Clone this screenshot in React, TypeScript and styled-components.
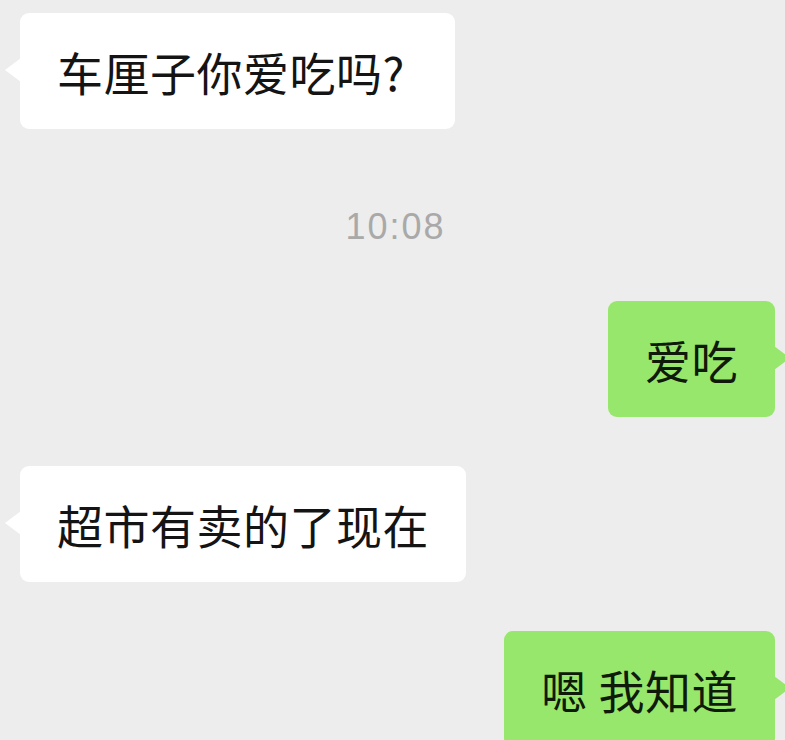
import React from 'react';
import styled, { createGlobalStyle } from 'styled-components';

const GlobalStyle = createGlobalStyle`
  html, body {
    margin: 0;
    padding: 0;
    overflow: hidden;
    background: #ededed;
  }
`;

const Chat = styled.div`
  width: 785px;
  height: 740px;
  box-sizing: border-box;
  padding-top: 13px;
  display: flex;
  flex-direction: column;
  gap: 49px;
  background: #ededed;
  font-family: "Noto Sans CJK SC", "Noto Sans", sans-serif;
`;

const Row = styled.div<{ $mine?: boolean }>`
  display: flex;
  justify-content: ${p => (p.$mine ? 'flex-end' : 'flex-start')};
  padding: ${p => (p.$mine ? '0 10px 0 0' : '0 0 0 20px')};
`;

const Bubble = styled.div<{ $mine?: boolean }>`
  position: relative;
  box-sizing: border-box;
  height: 116px;
  padding: 0 37px;
  display: flex;
  align-items: center;
  border-radius: 9px;
  background: ${p => (p.$mine ? '#96e76b' : '#ffffff')};
  color: ${p => (p.$mine ? '#0f1a09' : '#141414')};
  font-size: 46px;
  line-height: 1;
  letter-spacing: 0.5px;
  white-space: pre;

  &::before {
    content: '';
    position: absolute;
    top: 45px;
    width: 16px;
    height: 24px;
    background: inherit;
    ${p =>
      p.$mine
        ? 'right: -15px; clip-path: polygon(0 0, 100% 50%, 0 100%);'
        : 'left: -15px; clip-path: polygon(100% 0, 0 50%, 100% 100%);'}
  }
`;

/* trailing punctuation takes most of a full-width cell, like the phone font */
const Punct = styled.span`
  display: inline-block;
  width: 0.78em;
`;

const Time = styled.div`
  display: flex;
  justify-content: center;
  padding: 29px 0 5px 6px;
  height: 40px;
  align-items: center;
  font-family: "Liberation Sans", Arial, sans-serif;
  font-size: 36px;
  letter-spacing: 2px;
  color: #a9a9a9;
`;

type Item =
  | { kind: 'msg'; mine: boolean; text: string; punct?: string }
  | { kind: 'time'; text: string };

const items: Item[] = [
  { kind: 'msg', mine: false, text: '车厘子你爱吃吗', punct: '?' },
  { kind: 'time', text: '10:08' },
  { kind: 'msg', mine: true, text: '爱吃' },
  { kind: 'msg', mine: false, text: '超市有卖的了现在' },
  { kind: 'msg', mine: true, text: '嗯 我知道' },
];

export default function App() {
  return (
    <>
      <GlobalStyle />
      <Chat>
        {items.map((it, i) =>
          it.kind === 'time' ? (
            <Time key={i}>{it.text}</Time>
          ) : (
            <Row key={i} $mine={it.mine}>
              <Bubble $mine={it.mine}>
                {it.text}
                {it.punct && <Punct>{it.punct}</Punct>}
              </Bubble>
            </Row>
          )
        )}
      </Chat>
    </>
  );
}
